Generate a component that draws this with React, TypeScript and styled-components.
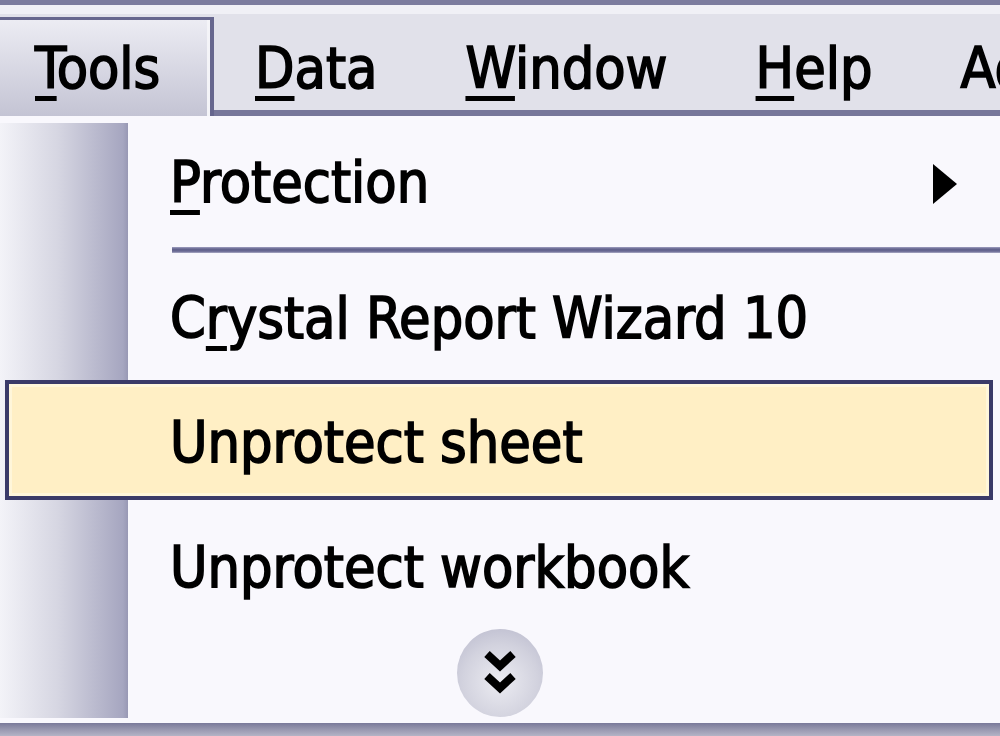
import React from "react";
import styled, { createGlobalStyle } from "styled-components";

const Global = createGlobalStyle`
  html, body { margin: 0; padding: 0; background: #f9f8fd; }
  body { font-family: "DejaVu Sans Condensed", "DejaVu Sans", sans-serif; }
  * { box-sizing: border-box; }
`;

const Screen = styled.div`
  width: 1000px;
  height: 736px;
  overflow: hidden;
  display: flex;
  flex-direction: column;
  border-top: 5px solid #7b7b9e;
  font-family: "DejaVu Sans Condensed", "DejaVu Sans", sans-serif;
  font-size: 57px;
  color: #000;
  -webkit-text-stroke: 1.6px #000;
  background: #f9f8fd;
`;

const MenuBar = styled.div`
  height: 111px;
  flex: none;
  display: flex;
  white-space: nowrap;
  background: linear-gradient(#f0f0f6 0 9px, #e1e1ea 9px);
`;

const ActiveTab = styled.div`
  flex: none;
  width: 214px;
  margin-top: 12px;
  padding: 15px 0 0 35px;
  line-height: 66px;
  border-top: 3px solid #66668e;
  border-right: 4px solid #66668e;
  background: linear-gradient(#ececf3, #c4c4d4);
  box-shadow: inset -3px 0 0 #f4f4f8;
`;

const BarRest = styled.div`
  flex: 1;
  display: flex;
  border-bottom: 6px solid #77779a;
  overflow: hidden;
`;

const BarItem = styled.div`
  padding: 30px 44px 0 44px;
  line-height: 66px;
  &:first-child { padding-left: 41px; }
`;

const Key = styled.span`
  text-decoration: underline;
  text-decoration-thickness: 5px;
  text-underline-offset: 8px;
`;

const Menu = styled.div`
  flex: 1;
  display: flex;
  flex-direction: column;
  padding-top: 7px;
`;

const List = styled.div`
  height: 595px;
  flex: none;
  display: flex;
  flex-direction: column;
  background:
    linear-gradient(to right, #f3f3f8 0%, #d6d6e2 45%, #a6a6c0 96%, #9898b4 100%) 0 0 / 128px 100% no-repeat,
    #f9f8fd;
`;

const Row = styled.div<{ $h: number; $pt: number; $hot?: boolean }>`
  flex: none;
  height: ${(p) => p.$h}px;
  display: flex;
  align-items: flex-start;
  justify-content: space-between;
  padding: ${(p) => p.$pt}px 42px 0 ${(p) => (p.$hot ? 161 : 170)}px;
  line-height: 66px;
  white-space: nowrap;
  ${(p) =>
    p.$hot &&
    `
    margin: 0 7px 2px 5px;
    border: 4px solid #3a3a68;
    background: #ffefc5;
    box-shadow: inset 0 0 0 3px #fff6da;
  `}
`;

const Arrow = styled.svg`
  margin-top: 15px;
  flex: none;
`;

const Separator = styled.div`
  flex: none;
  height: 10px;
  padding-left: 172px;
  display: flex;
  align-items: flex-start;
  &::after {
    content: "";
    flex: 1;
    height: 6px;
    background: linear-gradient(#a0a0c0, #62628c 35%, #686892 70%, #acacc6);
  }
`;

const MoreRow = styled.div`
  flex: 1;
  display: flex;
  justify-content: center;
`;

const MoreButton = styled.div`
  width: 86px;
  height: 88px;
  border-radius: 50%;
  display: flex;
  align-items: center;
  justify-content: center;
  background: radial-gradient(circle at 50% 60%, #ececf2 0%, #d2d2de 55%, #b6b6ca 100%);
`;

const MenuFoot = styled.div`
  flex: 1;
  margin-top: 5px;
  background: linear-gradient(#7a7a9a, #9898b0 50%, #b4b4c6);
`;

export default function App() {
  return (
    <>
      <Global />
      <Screen>
        <MenuBar>
          <ActiveTab>
            <Key>T</Key>ools
          </ActiveTab>
          <BarRest>
            <BarItem>
              <Key>D</Key>ata
            </BarItem>
            <BarItem>
              <Key>W</Key>indow
            </BarItem>
            <BarItem>
              <Key>H</Key>elp
            </BarItem>
            <BarItem>Adobe PDF</BarItem>
          </BarRest>
        </MenuBar>
        <Menu>
          <List>
            <Row $h={124} $pt={26}>
              <span>
                <Key>P</Key>rotection
              </span>
              <Arrow width="26" height="40" viewBox="0 0 26 40">
                <path d="M1 0 L25 20 L1 40 Z" fill="#000" />
              </Arrow>
            </Row>
            <Separator />
            <Row $h={123} $pt={28}>
              <span>
                C<Key>r</Key>ystal Report Wizard 10
              </span>
            </Row>
            <Row $h={120} $pt={25} $hot>
              <span>Unprotect sheet</span>
            </Row>
            <Row $h={127} $pt={32}>
              <span>Unprotect workbook</span>
            </Row>
            <MoreRow>
              <MoreButton>
                <svg width="32" height="46" viewBox="0 0 32 46">
                  <path
                    d="M3 4 L16 16 L29 4 M3 26 L16 38 L29 26"
                    fill="none"
                    stroke="#000"
                    strokeWidth="8"
                    strokeLinecap="butt"
                    strokeLinejoin="miter"
                  />
                </svg>
              </MoreButton>
            </MoreRow>
          </List>
          <MenuFoot />
        </Menu>
      </Screen>
    </>
  );
}
